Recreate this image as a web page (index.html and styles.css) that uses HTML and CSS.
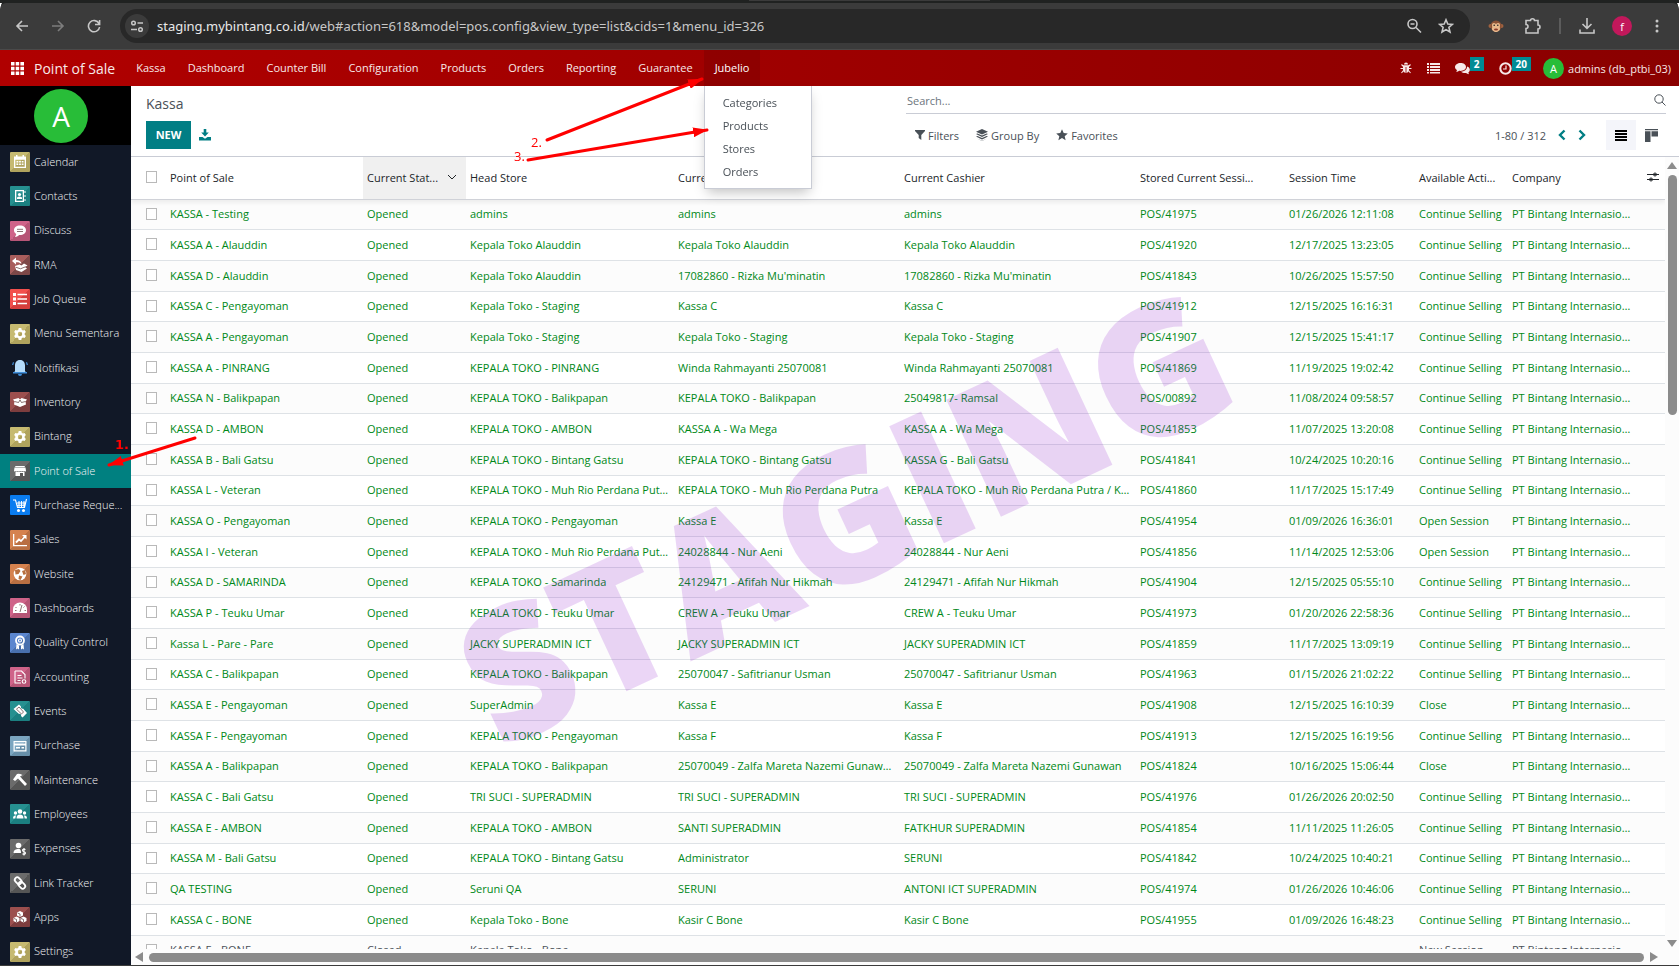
FILE: index.html
```
<!DOCTYPE html>
<html lang="id">
<head>
    <meta charset="UTF-8">
    <meta name="viewport" content="width=device-width, initial-scale=1.0">
    <title>Kassa - Point of Sale</title>
    <link rel="stylesheet" href="styles.css">
</head>
<body>
    <div class="tab-strip"><div class="active-tab"></div></div>
    <div class="browser-bar">
        <button class="browser-btn" aria-label="Back"><svg width="14" height="14" viewBox="0 0 14 14"><path d="M13 7H2M7 2L2 7l5 5"/></svg></button>
        <button class="browser-btn dim" aria-label="Forward"><svg width="14" height="14" viewBox="0 0 14 14"><path d="M1 7h11M7 2l5 5-5 5"/></svg></button>
        <button class="browser-btn" aria-label="Reload"><svg width="14" height="14" viewBox="0 0 14 14"><path d="M12 4.5A5.6 5.6 0 1 0 12.6 8M12.6 1v4.5H8"/></svg></button>
        <div class="address">
            <button class="site-info" aria-label="Site information"><svg width="14" height="14" viewBox="0 0 14 14"><circle cx="3.5" cy="4" r="1.8"/><path d="M7.500 4H13M1 10.500h6"/><circle cx="10.500" cy="10.500" r="1.800"/></svg></button>
            <span class="url"><b>staging.mybintang.co.id</b>/web#action=618&amp;model=pos.config&amp;view_type=list&amp;cids=1&amp;menu_id=326</span>
            <button class="browser-btn" aria-label="Zoom"><svg width="16" height="16" viewBox="0 0 16 16"><circle cx="6.500" cy="6" r="4.500"/><path d="M10 9.500l5 5M4.500 6h4"/></svg></button>
            <button class="browser-btn" aria-label="Bookmark"><svg width="16" height="16" viewBox="0 0 16 16"><path d="M8 1.800l1.800 4.200 4.600.4-3.500 3 1.100 4.600L8 11.600 4 14l1.100-4.600-3.500-3L6.200 6z"/></svg></button>
        </div>
        <div class="browser-tools">
            <svg class="monkey" width="16" height="16" viewBox="0 0 16 16"><circle cx="2.500" cy="8" r="2" fill="#a0623f"/><circle cx="13.500" cy="8" r="2" fill="#a0623f"/><circle cx="8" cy="8" r="5.500" fill="#8a5236"/><path d="M8 6c2-2 4-1 4 1s-.5 2 0 3.500S10 14 8 14s-4.500-2-4-3.500S4 9 4 7s2-3 4-1z" fill="#e9b98c"/><circle cx="6.200" cy="7.200" r=".8" fill="#222"/><circle cx="9.800" cy="7.200" r=".8" fill="#222"/><ellipse cx="8" cy="11.500" rx="2" ry=".9" fill="#8a3a2a"/></svg>
            <button class="browser-btn" aria-label="Extensions"><svg width="18" height="18" viewBox="0 0 18 18"><path d="M2 3.500h4.500a2 1.800 0 0 1 4 0H14V8a2 2 0 0 1 0 4v4H2v-4.500a2 2 0 0 0 0-4z"/></svg></button>
            <span class="separator"></span>
            <button class="browser-btn" aria-label="Downloads"><svg width="18" height="18" viewBox="0 0 18 18"><path d="M9 1v10M4.500 7L9 11.300 13.500 7M2 12.500V16h14v-3.500"/></svg></button>
            <button class="profile" aria-label="Profile">f</button>
            <button class="browser-btn" aria-label="Menu"><svg class="solid" width="16" height="16" viewBox="0 0 16 16"><circle cx="8" cy="3" r="1.500"/><circle cx="8" cy="8" r="1.500"/><circle cx="8" cy="13" r="1.500"/></svg></button>
        </div>
    </div>

    <header class="navbar">
        <button class="apps-btn" aria-label="Apps"><svg class="solid" width="13" height="13" viewBox="0 0 13 13"><path d="M0 0h3.500v3.500H0zM4.700 0h3.500v3.500H4.700zM9.400 0H13v3.500H9.400zM0 4.700h3.500v3.500H0zM4.700 4.700h3.500v3.500H4.700zM9.400 4.700H13v3.500H9.400zM0 9.400h3.500V13H0zM4.700 9.400h3.500V13H4.700zM9.400 9.400H13V13H9.400z"/></svg></button>
        <a class="brand" href="#">Point of Sale</a>
        <nav>
            <ul class="menu">
                <li><a href="#">Kassa</a></li>
                <li><a href="#">Dashboard</a></li>
                <li><a href="#">Counter Bill</a></li>
                <li><a href="#">Configuration</a></li>
                <li><a href="#">Products</a></li>
                <li><a href="#">Orders</a></li>
                <li><a href="#">Reporting</a></li>
                <li><a href="#">Guarantee</a></li>
                <li class="open">
                    <a href="#">Jubelio</a>
                    <div class="dropdown">
                        <a href="#">Categories</a>
                        <a href="#">Products</a>
                        <a href="#">Stores</a>
                        <a href="#">Orders</a>
                    </div>
                </li>
            </ul>
        </nav>
        <div class="systray">
            <button aria-label="Debug"><svg class="solid" width="12" height="12" viewBox="0 0 12 12"><path d="M4 2.500a2 2 0 0 1 4 0zM3 3.200h6v5A2.800 3 0 0 1 6.400 11V5h-.8v6A2.800 3 0 0 1 3 8.200z"/><path d="M3.500 4.500L1.500 2.500M3 6.500H.5M3.500 8.500l-2 2.500M8.500 4.500l2-2M9 6.500h2.500M8.500 8.500l2 2.500" fill="none" stroke="currentColor" stroke-width="1.100"/></svg></button>
            <button aria-label="Queue"><svg class="solid" width="13" height="12" viewBox="0 0 13 12"><path d="M0 1h2v2H0zM3 1h10v2H3zM0 4h2v2H0zM3 4h10v2H3zM0 7h2v2H0zM3 7h10v2H3zM0 10h2v1.500H0zM3 10h10v1.500H3z"/></svg></button>
            <button aria-label="Messages"><svg class="solid" width="15" height="13" viewBox="0 0 15 13"><path d="M5.500 1C2.500 1 0 2.800 0 5c0 1.300.8 2.400 2 3.100L1.300 10c1.300-.2 2.200-.7 2.900-1.200C8 9.300 11 7.500 11 5S8.500 1 5.500 1z"/><path d="M12 4.500c.2 3-2.500 5-6 5.300 1.200 1 3.300 1.500 5 1.200.8.600 1.800 1 3 1.200l-.7-1.700C15.800 8.500 15.200 5.500 12 4.500z"/></svg><span class="badge">2</span></button>
            <button aria-label="Activities"><svg width="13" height="13" viewBox="0 0 13 13"><circle cx="6.500" cy="6.500" r="5.200" fill="none" stroke="currentColor" stroke-width="2"/><path d="M7 3.500V7H4" fill="none" stroke="currentColor" stroke-width="1.200"/></svg><span class="badge">20</span></button>
            <button class="user"><span class="user-avatar">A</span>admins (db_ptbi_03)</button>
        </div>
    </header>

    <main>
        <aside class="sidebar">
            <div class="logo"><span>A</span></div>
            <ul class="apps">
                <li><a href="#"><svg class="sand" viewBox="0 0 20 20"><path d="M4 4.500h2V3h1.500v1.500h5V3H14v1.500h2V16H4zm1.300 3.300v6.900h9.400V7.800z"/><path d="M6.500 9h1.800v1.500H6.500zM9.100 9h1.800v1.500H9.100zM11.700 9h1.800v1.500h-1.800zM6.500 11.500h1.800V13H6.500zM9.100 11.500h1.800V13H9.100zM11.700 11.500h1.800V13h-1.800z"/></svg><span>Calendar</span></a></li>
                <li><a href="#"><svg class="teal" viewBox="0 0 20 20"><path fill-rule="evenodd" d="M5 4h9v12H5zm1.300 1.300v9.400h6.400V5.300z"/><circle cx="9.500" cy="8.500" r="1.600"/><path d="M7 13v-1.500q2.500-2 5 0V13zM14.500 5h1v2h-1zM14.500 9h1v2h-1zM14.500 13h1v2h-1z"/></svg><span>Contacts</span></a></li>
                <li><a href="#"><svg class="pink" viewBox="0 0 20 20"><path d="M10 4.500c-3.500 0-6 2-6 4.700 0 1.600.9 3 2.300 3.800L5 16c2-.2 3.300-1.200 4-2.100 4 .3 7-1.700 7-4.700S13.500 4.500 10 4.500z"/><path class="cut" d="M7 8.300h6M7 10.500h6"/></svg><span>Discuss</span></a></li>
                <li><a href="#"><svg class="brown" viewBox="0 0 20 20"><path d="M2 6l4-3.500V5c3 0 5 1 5.500 4C10 7.500 8.500 7 6 7.200v2.300zM5 11l4.500-1.500 2 1 2.500-2 3.500 2-2.500 1.500 2 1.500-5.500 3.500L6 15l-.5-2.500z"/><path class="cut" d="M6 12.300l4.500 1.500 5-2"/></svg><span>RMA</span></a></li>
                <li><a href="#"><svg class="red" viewBox="0 0 20 20"><path d="M3 4h3v3H3zM7.500 4.700h9.500v1.600H7.500zM3 8.500h3v3H3zM7.500 9.200h9.500v1.600H7.500zM3 13h3v3H3zM7.500 13.700h9.500v1.600H7.500z"/></svg><span>Job Queue</span></a></li>
                <li><a href="#"><svg class="sand" viewBox="0 0 20 20"><use href="#gear"/></svg><span>Menu Sementara</span></a></li>
                <li><a href="#"><svg class="bell" viewBox="0 0 20 20"><path d="M10 2c3.500 0 5 2.500 5 5.500V13l1.500 2h-13L5 13V7.500C5 4.500 6.500 2 10 2z"/><path class="shade" d="M8 16h4a2 2 0 0 1-4 0zM3 14h14v1.500H3zM2 7l1-3 1 .5-.7 2.500zM18 7l-1-3-1 .5.7 2.500z"/></svg><span>Notifikasi</span></a></li>
                <li><a href="#"><svg class="maroon" viewBox="0 0 20 20"><path d="M3 7.500L8.500 6l1.500 1.500L11.500 6 17 7.500l-1.500 2 .5 3-6 2.500-6-2.500.5-3z"/><path class="cut" d="M4.500 9.500l4 1L10 8l1.500 2.500 4-1"/></svg><span>Inventory</span></a></li>
                <li><a href="#"><svg class="sand" viewBox="0 0 20 20"><use href="#gear"/></svg><span>Bintang</span></a></li>
                <li class="selected"><a href="#"><svg class="grey" viewBox="0 0 20 20"><path d="M5.500 5h9l.5 1H5zM4.500 6.500h11L16 10q-.8 1-1.700 0-.8 1-1.700 0-.9 1-1.800 0-.9 1-1.700 0-.9 1-1.700 0-.9 1-1.700 0-.8 1-1.700 0zM5.500 11h9v4h-1.500v-3h-3v3h-4.500z"/></svg><span>Point of Sale</span></a></li>
                <li><a href="#"><svg class="blue" viewBox="0 0 20 20"><path class="line" d="M3 5h2.500l2 7.500h7L16.500 4M7 8h8M7.500 10.300h7M9 6v6M11.500 6v6M14 6v6"/><circle cx="8.500" cy="15.500" r="1.500"/><circle cx="13.500" cy="15.500" r="1.500"/></svg><span>Purchase Reque...</span></a></li>
                <li><a href="#"><svg class="orange" viewBox="0 0 20 20"><path d="M3 4h1.300v11H17v1.300H3z"/><path class="line bold" d="M6 12.500l3-3 2 1.500 4-4.500"/><path d="M12 5h4.500v4.500z"/></svg><span>Sales</span></a></li>
                <li><a href="#"><svg class="orange" viewBox="0 0 20 20"><circle cx="10" cy="10" r="6.300"/><path class="land" d="M5 6l4-1 1.500 2-2 3-3 .5zM12 7l3-1 1 4-2.500 1zM9 11.500l3.500 1-2 3.500-2-1z"/></svg><span>Website</span></a></li>
                <li><a href="#"><svg class="pink" viewBox="0 0 20 20"><path d="M3 15v-3.500a7 7 0 0 1 14 0V15z"/><path class="cut" d="M10 14l2-7M5.500 9l1 1M10 6v1.500M5 12.500h1.500M14.500 12.500H16M14.500 8.500l-1 1"/></svg><span>Dashboards</span></a></li>
                <li><a href="#"><svg class="indigo" viewBox="0 0 20 20"><circle class="line bold" cx="10" cy="7.500" r="4"/><circle class="line" cx="10" cy="7.500" r="1.500"/><path d="M6.500 11l2.500 1.500v4L7.500 15.500 6 16.500zM13.500 11L11 12.500v4l1.500-1 1.500 1z"/></svg><span>Quality Control</span></a></li>
                <li><a href="#"><svg class="pink" viewBox="0 0 20 20"><path class="line" d="M5 4h6.500L15 7.500v4M5 4v12h6M7.500 8.500h4M7.500 11h5M7.500 13.500h3"/><circle class="line" cx="14" cy="14.500" r="1.800"/></svg><span>Accounting</span></a></li>
                <li><a href="#"><svg class="teal" viewBox="0 0 20 20"><path d="M9 3.500l2 2a1.500 1.500 0 0 0 2 2l4 4.500-4.500 4.500-1.500-1.500a1.500 1.500 0 0 0-2-2L3.500 8z"/><path class="cut" d="M6.500 8.200L9 6l4.500 5-2 2z"/></svg><span>Events</span></a></li>
                <li><a href="#"><svg class="sky" viewBox="0 0 20 20"><path fill-rule="evenodd" d="M3.500 5h13v10.500h-13zm1.200 4.500v4.800h10.600V9.500zm0-3.300v1.300h10.600V6.200z"/><path d="M6 11h4v1.500H6zM11.500 11h2.500v1.500h-2.500z"/></svg><span>Purchase</span></a></li>
                <li><a href="#"><svg class="grey" viewBox="0 0 20 20"><path d="M3 9.500L7 4q2-1 5.500 1L10 6.500l7 7.500-2 2-7-7.500-3 2.500z"/></svg><span>Maintenance</span></a></li>
                <li><a href="#"><svg class="teal" viewBox="0 0 20 20"><circle cx="10" cy="7.500" r="2.300"/><circle cx="5.500" cy="9" r="1.700"/><circle cx="14.500" cy="9" r="1.700"/><path d="M6.500 14.500q0-4 3.500-4t3.500 4zM3 14.500q0-3.500 3.200-3-.8 1-.8 3zM17 14.500q0-3.500-3.200-3 .8 1 .8 3z"/></svg><span>Employees</span></a></li>
                <li><a href="#"><svg class="grey" viewBox="0 0 20 20"><circle cx="8.500" cy="6.500" r="2.800"/><path d="M3.500 14q0-3.500 4-4h2q1.500.5 1.500 4z"/><path class="line" d="M15.500 10.500q-3-1-3 .8 0 1.200 1.500 1.400 1.500.3 1.500 1.400 0 1.700-3 .8M14 9v7.500"/></svg><span>Expenses</span></a></li>
                <li><a href="#"><svg class="grey" viewBox="0 0 20 20"><rect class="line bold" x="4.500" y="5" width="7.500" height="5" rx="2.500" transform="rotate(45 8 7.500)"/><rect class="line bold" x="8" y="10" width="7.500" height="5" rx="2.500" transform="rotate(45 12 12.500)"/></svg><span>Link Tracker</span></a></li>
                <li><a href="#"><svg class="maroon" viewBox="0 0 20 20"><path d="M10 4l3 1.500v3L10 10 7 8.500v-3zM6.500 9.500l3 1.500v3l-3 1.500-3-1.500v-3zM13.500 9.500l3 1.500v3l-3 1.500-3-1.500v-3z"/><path class="cut" d="M7.500 6l2.500 1v2.500M4 11.500l2.500 1V15M11 11.500l2.500 1V15"/></svg><span>Apps</span></a></li>
                <li><a href="#"><svg class="sand" viewBox="0 0 20 20"><path id="gear" fill-rule="evenodd" d="M8.700 4h2.600l.4 1.700 1.200.7 1.700-.5 1.300 2.200-1.200 1.200v1.400l1.200 1.200-1.300 2.200-1.700-.5-1.200.7-.4 1.700H8.700l-.4-1.700-1.200-.7-1.700.5-1.300-2.200 1.200-1.200V9.300L4.100 8.100l1.300-2.200 1.700.5 1.200-.7zM10 7.800a2.200 2.200 0 1 0 0 4.400 2.200 2.200 0 0 0 0-4.400z"/></svg><span>Settings</span></a></li>
            </ul>
        </aside>

        <section class="content">
            <div class="control-panel">
                <div class="cp-left">
                    <h1>Kassa</h1>
                    <div class="cp-buttons">
                        <button class="btn-new">NEW</button>
                        <button class="icon-btn" aria-label="Export"><svg class="solid" width="12" height="12" viewBox="0 0 12 12"><path d="M4.700 0h2.600v3.500h2.500L6 7.500 2.200 3.500h2.500zM0 8h3.500L6 9.800 8.500 8H12v3.500H0z"/></svg></button>
                    </div>
                </div>
                <div class="cp-right">
                    <div class="search">
                        <input type="text" placeholder="Search..." aria-label="Search">
                        <button aria-label="Search"><svg width="12" height="12" viewBox="0 0 12 12"><circle cx="5" cy="5" r="4.200"/><path d="M8 8l3.500 3.500"/></svg></button>
                    </div>
                    <div class="cp-tools">
                        <button class="filter"><svg class="solid" width="10" height="10" viewBox="0 0 10 10"><path d="M0 0h10v1L6.300 5v5L3.700 8V5L0 1z"/></svg>Filters</button>
                        <button class="filter"><svg class="solid" width="12" height="12" viewBox="0 0 12 12"><path d="M6 0l6 2.700-6 2.700L0 2.700zM0 5l1.500-.6L6 6.500l4.500-2.100L12 5 6 7.900zM0 7.500L1.500 7 6 9.100 10.500 7l1.500.5L6 10.400zM1 9.500l5 2.300 5-2.300L6 12z"/></svg>Group By</button>
                        <button class="filter"><svg class="solid" width="12" height="12" viewBox="0 0 12 12"><path d="M6 .3l1.700 3.800 4.100.4-3.100 2.700.9 4L6 9.100l-3.600 2.100.9-4L.2 4.500l4.100-.4z"/></svg>Favorites</button>
                        <div class="pager">
                            <span>1-80 / 312</span>
                            <button aria-label="Previous"><svg width="8" height="12" viewBox="0 0 8 12"><path d="M6.500 1.500L2 6l4.500 4.500"/></svg></button>
                            <button aria-label="Next"><svg width="8" height="12" viewBox="0 0 8 12"><path d="M1.500 1.500L6 6l-4.500 4.500"/></svg></button>
                        </div>
                        <button class="view active" aria-label="List"><svg class="solid" width="12" height="11" viewBox="0 0 12 11"><path d="M0 0h12v2H0zM0 3h12v2H0zM0 6h12v2H0zM0 9h12v2H0z"/></svg></button>
                        <button class="view" aria-label="Kanban"><svg class="solid" width="13" height="13" viewBox="0 0 13 13"><path d="M0 0h13v1.300H0zM0 2.300h5.500V13H0zM6.500 2.300H13v5.200H6.500z"/></svg></button>
                    </div>
                </div>
            </div>

            <div class="list">
                <div class="list-view">
                    <table>
                        <colgroup>
                            <col class="c-check"><col class="c-pos"><col class="c-status"><col class="c-head"><col class="c-user"><col class="c-cashier"><col class="c-session"><col class="c-time"><col class="c-action"><col class="c-company"><col class="c-opt">
                        </colgroup>
                        <thead>
                            <tr>
                                <th><input type="checkbox" aria-label="Select all"></th>
                                <th>Point of Sale</th>
                                <th class="sorted"><div><span>Current Stat...</span><svg width="10" height="6" viewBox="0 0 10 6"><path d="M1 1l4 4 4-4"/></svg></div></th>
                                <th>Head Store</th>
                                <th>Current User</th>
                                <th>Current Cashier</th>
                                <th>Stored Current Sessi...</th>
                                <th>Session Time</th>
                                <th>Available Acti...</th>
                                <th>Company</th>
                                <th class="options"><button aria-label="Optional columns"><svg width="12" height="12" viewBox="0 0 12 12"><path d="M0 3.500h12M0 8.500h12"/><circle cx="8" cy="3.500" r="1.500"/><circle cx="4" cy="8.500" r="1.500"/></svg></button></th>
                            </tr>
                        </thead>
                        <tbody id="rows"></tbody>
                    </table>
                </div>
                <div class="scroll-y"><i class="up"></i><div class="thumb"></div><i class="down"></i></div>
                <div class="scroll-x"><i class="left"></i><div class="thumb"></div><i class="right"></i></div>
            </div>
        </section>
    </main>

    <div class="watermark"><span>STAGING</span></div>

    <svg class="notes" width="720" height="480" viewBox="0 0 720 480">
        <defs>
            <marker id="head" markerUnits="userSpaceOnUse" markerWidth="15" markerHeight="10" refX="14" refY="5" orient="auto"><path d="M0 0l15 5-15 5z"/></marker>
        </defs>
        <path d="M195 438L109 465" marker-end="url(#head)"/>
        <path d="M547 140L702 79" marker-end="url(#head)"/>
        <path d="M528 160L707 130" marker-end="url(#head)"/>
        <text class="first" x="115" y="449">1.</text>
        <text x="531" y="147">2.</text>
        <text x="514" y="161">3.</text>
    </svg>

    <script src="script.js"></script>
</body>
</html>
```
FILE: styles.css
```
* {
    box-sizing: border-box;
}
body {
    font-family: "Open Sans", "Noto Sans", sans-serif;
    font-size: 11px;
    margin: 0;
    height: 100vh;
    display: flex;
    flex-direction: column;
    overflow: hidden;
    color: #495057;
    background-color: #ffffff;
    border-bottom: 1px solid #3c3c3c;
}
button {
    font: inherit;
    color: inherit;
    background: none;
    border: 0;
    padding: 0;
    cursor: pointer;
}
a {
    color: inherit;
    text-decoration: none;
}
ul {
    list-style: none;
    margin: 0;
    padding: 0;
}
svg {
    display: block;
    flex: none;
    fill: none;
    stroke: currentColor;
}
svg.solid {
    fill: currentColor;
    stroke: none;
}

/* browser */
.tab-strip {
    height: 3px;
    flex: none;
    background-color: #202221;
    display: flex;
    justify-content: center;
}
.active-tab {
    width: 241px;
    margin-left: 60px;
    background-color: #3b3b3b;
}
.browser-bar {
    height: 47px;
    flex: none;
    display: flex;
    align-items: center;
    gap: 12px;
    padding: 0 10px;
    background-color: #3b3b3b;
    border-radius: 6px 6px 0 0;
    box-shadow: 0 -3px 0 -1px #202221;
    border-bottom: 1px solid #4a4a4a;
    color: #c7c7c7;
}
.browser-btn {
    width: 24px;
    height: 24px;
    display: flex;
    align-items: center;
    justify-content: center;
}
.browser-btn svg {
    stroke-width: 1.6;
}
.dim {
    color: #7d7d7d;
}
.address {
    flex: 1;
    height: 34px;
    margin-left: 2px;
    display: flex;
    align-items: center;
    gap: 8px;
    padding: 0 12px 0 5px;
    border-radius: 17px;
    background-color: #282828;
}
.site-info {
    width: 24px;
    height: 24px;
    border-radius: 50%;
    background-color: #3b3b3b;
    display: flex;
    align-items: center;
    justify-content: center;
}
.site-info svg {
    stroke-width: 1.5;
}
.url {
    flex: 1;
    font-family: "Noto Sans", sans-serif;
    font-size: 13px;
}
.url b {
    font-weight: 400;
    color: #e8e8e8;
}
.browser-tools {
    display: flex;
    align-items: center;
    gap: 14px;
    margin-left: 6px;
}
.separator {
    width: 2px;
    height: 16px;
    background-color: #5c5c5c;
}
.profile {
    width: 20px;
    height: 20px;
    margin: 0 -1px;
    border-radius: 50%;
    background-color: #c2185b;
    color: #ffffff;
}
.monkey {
    margin-right: 3px;
    stroke: none;
}

/* navbar */
.navbar {
    height: 36px;
    flex: none;
    display: flex;
    align-items: center;
    padding: 0 8px 0 11px;
    background-image: linear-gradient(to right, #b00000, #8a0000);
    color: #f7e9e9;
}
.apps-btn {
    margin-right: 10px;
    color: #ffffff;
}
.brand {
    font-size: 14px;
    margin-right: 10px;
}
.menu {
    display: flex;
}
.menu li {
    position: relative;
}
.menu > li > a {
    display: block;
    padding: 0 11px;
    line-height: 36px;
}
.menu .open {
    background-color: rgba(0, 0, 0, 0.1);
    color: #ffffff;
}
.dropdown {
    position: absolute;
    top: 100%;
    left: 0;
    z-index: 5;
    width: 108px;
    padding: 5px 0;
    background-color: #ffffff;
    border: 1px solid #c9ccd5;
    border-top: 0;
    box-shadow: 0 6px 12px -3px rgba(0, 0, 0, 0.25);
    color: #495057;
}
.dropdown a {
    display: block;
    line-height: 23px;
    padding-left: 18px;
}
.systray {
    display: flex;
    align-items: center;
    gap: 15px;
    margin-left: auto;
}
.systray button {
    display: flex;
    align-items: center;
}
.badge {
    height: 14px;
    margin: -8px 0 0 0;
    padding: 0 4px;
    line-height: 14px;
    font-size: 10px;
    font-weight: 700;
    background-color: #008b94;
    color: #ffffff;
}
.systray .user {
    gap: 4px;
    margin-left: -3px;
}
.user-avatar {
    width: 21px;
    height: 21px;
    border-radius: 50%;
    line-height: 21px;
    text-align: center;
    background-color: #28bd38;
    color: #ffffff;
}

/* sidebar */
main {
    flex: 1;
    min-height: 0;
    display: flex;
}
.sidebar {
    width: 131px;
    flex: none;
    overflow: hidden;
    background-color: #111827;
    color: #f3f4f6;
}
.logo {
    height: 59px;
    padding: 3px 0 0 34px;
    background-color: #000000;
}
.logo span {
    display: block;
    width: 54px;
    height: 54px;
    border-radius: 50%;
    line-height: 54px;
    font-size: 28px;
    text-align: center;
    background-color: #28bd38;
    color: #ffffff;
}
.apps a {
    height: 34px;
    display: flex;
    align-items: center;
    gap: 4px;
    padding-left: 10px;
    font-weight: 300;
    white-space: nowrap;
}
.apps span {
    padding-bottom: 2px;
}
.apps li:nth-child(3n) a {
    height: 35px;
}
.apps .selected {
    background-color: #008080;
}
.apps svg {
    width: 20px;
    height: 20px;
    border-radius: 1px;
    fill: #ffffff;
    stroke: none;
}
.apps .cut {
    fill: none;
    stroke: rgba(60, 20, 20, 0.6);
}
.apps .line {
    fill: none;
    stroke: #ffffff;
    stroke-width: 1.1;
}
.apps .bold {
    stroke-width: 1.8;
}
.apps .land {
    fill: #b8703f;
}
.apps .bell {
    fill: #b5dcfb;
}
.apps .shade {
    fill: #3f8edb;
}
.sand { background: linear-gradient(135deg, #c6ba71 50%, #b0a35d 50%); }
.teal { background: linear-gradient(135deg, #269090 50%, #1b7f80 50%); }
.pink { background: linear-gradient(135deg, #cf6389 50%, #b65576 50%); }
.brown { background: linear-gradient(135deg, #a85d5c 50%, #7e4848 50%); }
.red { background: linear-gradient(135deg, #f2504d 50%, #d63e3c 50%); }
.maroon { background: linear-gradient(135deg, #9c4f4e 50%, #7d3d3e 50%); }
.grey { background: linear-gradient(135deg, #6b6b6b 50%, #555555 50%); }
.blue { background: #0a7cf0; }
.orange { background: linear-gradient(135deg, #d5824f 50%, #b96f42 50%); }
.indigo { background: linear-gradient(135deg, #5b86cf 50%, #4970ae 50%); }
.sky { background: linear-gradient(135deg, #7ba5c0 50%, #688fa9 50%); }

/* control panel */
.content {
    flex: 1;
    min-width: 0;
    display: flex;
    flex-direction: column;
}
.control-panel {
    height: 71px;
    flex: none;
    display: grid;
    grid-template-columns: 1fr 1fr;
    padding: 0 13px 0 15px;
    border-bottom: 1px solid #c9ccd5;
}
h1 {
    margin: 8px 0 7px;
    font-size: 14px;
    line-height: 20px;
    font-weight: 400;
}
.cp-buttons {
    display: flex;
    align-items: center;
    gap: 8px;
}
.btn-new {
    width: 45px;
    height: 28px;
    padding-bottom: 2px;
    background-color: #017e84;
    color: #ffffff;
    font-weight: 700;
}
.icon-btn {
    color: #017e84;
}
.search {
    height: 28px;
    display: flex;
    align-items: center;
    border-bottom: 1px solid #c9ccd5;
}
.search input {
    flex: 1;
    border: 0;
    outline: 0;
    padding: 2px 1px 0;
    font: inherit;
}
.search input::placeholder {
    color: #6c757d;
}
.cp-tools {
    display: flex;
    align-items: center;
    gap: 17px;
    height: 30px;
    margin: 6px 0 0 9px;
}
.filter {
    display: flex;
    align-items: center;
    gap: 3px;
    font-weight: 500;
}
.pager {
    display: flex;
    align-items: center;
    gap: 12px;
    margin-left: auto;
}
.pager svg {
    color: #017e84;
    stroke-width: 2.4;
}
.view {
    width: 30px;
    height: 30px;
    margin-right: -17px;
    display: flex;
    align-items: center;
    justify-content: center;
}
.view:last-child {
    margin: 0;
}
.view.active {
    margin-left: 3px;
    background-color: #f4f5fa;
    color: #000000;
}

/* list */
.list {
    flex: 1;
    min-height: 0;
    display: grid;
    grid-template-columns: 1fr 14px;
    grid-template-rows: 1fr 16px;
    background-color: #fcfcfc;
}
.list-view {
    min-height: 0;
    overflow: hidden;
}
table {
    width: 100%;
    table-layout: fixed;
    border-collapse: separate;
    border-spacing: 0;
}
.c-check { width: 35px; }
.c-pos { width: 197px; }
.c-status { width: 103px; }
.c-head { width: 208px; }
.c-user { width: 226px; }
.c-cashier { width: 236px; }
.c-session { width: 149px; }
.c-time { width: 130px; }
.c-action { width: 93px; }
.c-company { width: 131px; }
.c-opt { width: 26px; }
th,
td {
    padding: 0 5px 2px 4px;
    text-align: left;
    white-space: nowrap;
    overflow: hidden;
    text-overflow: ellipsis;
}
th {
    height: 43px;
    font-weight: 500;
    color: #212529;
    background-color: #ffffff;
    border-bottom: 1px solid #d0d2d8;
}
th:first-child,
td:first-child {
    padding-left: 15px;
}
thead {
    position: relative;
    box-shadow: 0 3px 4px rgba(0, 0, 0, 0.06);
}
.sorted {
    padding-right: 0;
    background-color: #f0f0f0;
}
.sorted div {
    display: flex;
    align-items: center;
    justify-content: space-between;
    padding-right: 9px;
}
.options {
    padding: 0 0 0 8px;
}
td {
    height: 31px;
    color: #008818;
    background-color: #ffffff;
    border-bottom: 1px solid #dee2e6;
}
tbody tr:nth-child(3n+1) td {
    height: 30px;
}
tbody tr:nth-child(odd) td {
    background-color: #fcfcfc;
}
tr.closed td {
    color: #495057;
}
input[type="checkbox"] {
    appearance: none;
    display: block;
    width: 11px;
    height: 12px;
    margin: 0;
    border: 1px solid #b9b9b9;
    background-color: #ffffff;
}

/* scrollbars */
.scroll-y,
.scroll-x {
    display: flex;
    align-items: center;
}
.scroll-y {
    flex-direction: column;
    padding: 5px 0 2px;
    gap: 6px;
}
.scroll-x {
    padding: 0 7px 0 4px;
    gap: 6px;
}
.scroll-y .thumb {
    width: 9px;
    height: 240px;
    margin-bottom: auto;
    border-radius: 5px;
    background-color: #8b8b8b;
}
.scroll-x .thumb {
    flex: 1;
    height: 9px;
    border-radius: 5px;
    background-color: #8b8b8b;
}
.scroll-y i,
.scroll-x i {
    border: 5px solid transparent;
}
.scroll-y .up {
    border-top: 0;
    border-bottom: 7px solid #8b8b8b;
}
.scroll-y .down {
    border-bottom: 0;
    border-top: 7px solid #8b8b8b;
}
.scroll-x .left {
    border-left: 0;
    border-right: 8px solid #8b8b8b;
}
.scroll-x .right {
    border-right: 0;
    border-left: 8px solid #8b8b8b;
}

/* overlays */
.watermark {
    position: fixed;
    inset: 60px 0 0 8px;
    display: flex;
    align-items: center;
    justify-content: center;
    pointer-events: none;
}
.watermark span {
    font-size: 181px;
    line-height: 1;
    font-weight: 800;
    color: rgba(128, 0, 200, 0.16);
    transform: rotate(-25deg);
}
.notes {
    position: absolute;
    top: 0;
    left: 0;
    z-index: 10;
    pointer-events: none;
    stroke: #ff0000;
    stroke-width: 3;
    stroke-linecap: round;
}
.notes marker path,
.notes text {
    fill: #ff0000;
    stroke: none;
}
.notes text {
    font-size: 13px;
}
.notes .first {
    font-family: "DejaVu Sans", sans-serif;
    font-weight: 700;
}
```
FILE: script.js
```
const company = 'PT Bintang Internasional';
const longName = 'KEPALA TOKO - Muh Rio Perdana Putra';

// pos, head store, current user, cashier, session, time, action
const kassa = [
    ['KASSA - Testing', 'admins', 'admins', 'admins', '41975', '01/26/2026 12:11:08', 'Continue Selling'],
    ['KASSA A - Alauddin', 'Kepala Toko Alauddin', 'Kepala Toko Alauddin', 'Kepala Toko Alauddin', '41920', '12/17/2025 13:23:05', 'Continue Selling'],
    ['KASSA D - Alauddin', 'Kepala Toko Alauddin', "17082860 - Rizka Mu'minatin", "17082860 - Rizka Mu'minatin", '41843', '10/26/2025 15:57:50', 'Continue Selling'],
    ['KASSA C - Pengayoman', 'Kepala Toko - Staging', 'Kassa C', 'Kassa C', '41912', '12/15/2025 16:16:31', 'Continue Selling'],
    ['KASSA A - Pengayoman', 'Kepala Toko - Staging', 'Kepala Toko - Staging', 'Kepala Toko - Staging', '41907', '12/15/2025 15:41:17', 'Continue Selling'],
    ['KASSA A - PINRANG', 'KEPALA TOKO - PINRANG', 'Winda Rahmayanti 25070081', 'Winda Rahmayanti 25070081', '41869', '11/19/2025 19:02:42', 'Continue Selling'],
    ['KASSA N - Balikpapan', 'KEPALA TOKO - Balikpapan', 'KEPALA TOKO - Balikpapan', '25049817- Ramsal', '00892', '11/08/2024 09:58:57', 'Continue Selling'],
    ['KASSA D - AMBON', 'KEPALA TOKO - AMBON', 'KASSA A - Wa Mega', 'KASSA A - Wa Mega', '41853', '11/07/2025 13:20:08', 'Continue Selling'],
    ['KASSA B - Bali Gatsu', 'KEPALA TOKO - Bintang Gatsu', 'KEPALA TOKO - Bintang Gatsu', 'KASSA G - Bali Gatsu', '41841', '10/24/2025 10:20:16', 'Continue Selling'],
    ['KASSA L - Veteran', longName, longName, longName + ' / Kassa L', '41860', '11/17/2025 15:17:49', 'Continue Selling'],
    ['KASSA O - Pengayoman', 'KEPALA TOKO - Pengayoman', 'Kassa E', 'Kassa E', '41954', '01/09/2026 16:36:01', 'Open Session'],
    ['KASSA I - Veteran', longName, '24028844 - Nur Aeni', '24028844 - Nur Aeni', '41856', '11/14/2025 12:53:06', 'Open Session'],
    ['KASSA D - SAMARINDA', 'KEPALA TOKO - Samarinda', '24129471 - Afifah Nur Hikmah', '24129471 - Afifah Nur Hikmah', '41904', '12/15/2025 05:55:10', 'Continue Selling'],
    ['KASSA P - Teuku Umar', 'KEPALA TOKO - Teuku Umar', 'CREW A - Teuku Umar', 'CREW A - Teuku Umar', '41973', '01/20/2026 22:58:36', 'Continue Selling'],
    ['Kassa L - Pare - Pare', 'JACKY SUPERADMIN ICT', 'JACKY SUPERADMIN ICT', 'JACKY SUPERADMIN ICT', '41859', '11/17/2025 13:09:19', 'Continue Selling'],
    ['KASSA C - Balikpapan', 'KEPALA TOKO - Balikpapan', '25070047 - Safitrianur Usman', '25070047 - Safitrianur Usman', '41963', '01/15/2026 21:02:22', 'Continue Selling'],
    ['KASSA E - Pengayoman', 'SuperAdmin', 'Kassa E', 'Kassa E', '41908', '12/15/2025 16:10:39', 'Close'],
    ['KASSA F - Pengayoman', 'KEPALA TOKO - Pengayoman', 'Kassa F', 'Kassa F', '41913', '12/15/2025 16:19:56', 'Continue Selling'],
    ['KASSA A - Balikpapan', 'KEPALA TOKO - Balikpapan', '25070049 - Zalfa Mareta Nazemi Gunawan', '25070049 - Zalfa Mareta Nazemi Gunawan', '41824', '10/16/2025 15:06:44', 'Close'],
    ['KASSA C - Bali Gatsu', 'TRI SUCI - SUPERADMIN', 'TRI SUCI - SUPERADMIN', 'TRI SUCI - SUPERADMIN', '41976', '01/26/2026 20:02:50', 'Continue Selling'],
    ['KASSA E - AMBON', 'KEPALA TOKO - AMBON', 'SANTI SUPERADMIN', 'FATKHUR SUPERADMIN', '41854', '11/11/2025 11:26:05', 'Continue Selling'],
    ['KASSA M - Bali Gatsu', 'KEPALA TOKO - Bintang Gatsu', 'Administrator', 'SERUNI', '41842', '10/24/2025 10:40:21', 'Continue Selling'],
    ['QA TESTING', 'Seruni QA', 'SERUNI', 'ANTONI ICT SUPERADMIN', '41974', '01/26/2026 10:46:06', 'Continue Selling'],
    ['KASSA C - BONE', 'Kepala Toko - Bone', 'Kasir C Bone', 'Kasir C Bone', '41955', '01/09/2026 16:48:23', 'Continue Selling'],
    ['KASSA E - BONE', 'Kepala Toko - Bone', '', '', '', '', 'New Session']
];

document.getElementById('rows').innerHTML = kassa.map(([pos, head, user, cashier, session, time, action]) => `
    <tr class="${session ? 'opened' : 'closed'}">
        <td><input type="checkbox" aria-label="${pos}"></td>
        <td>${pos}</td>
        <td>${session ? 'Opened' : 'Closed'}</td>
        <td>${head}</td>
        <td>${user}</td>
        <td>${cashier}</td>
        <td>${session ? 'POS/' + session : ''}</td>
        <td>${time}</td>
        <td>${action}</td>
        <td>${company}</td>
        <td></td>
    </tr>`).join('');
```
